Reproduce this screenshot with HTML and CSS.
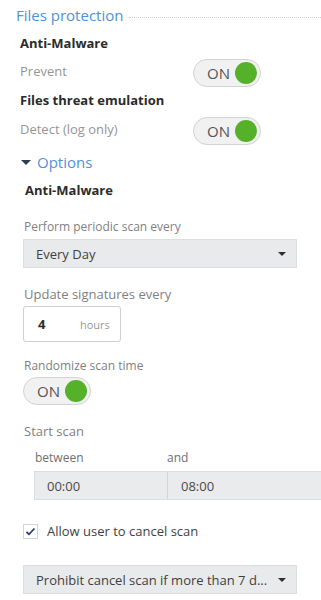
FILE: index.html
```html
<!DOCTYPE html>
<html>
<head>
<meta charset="utf-8">
<link rel="stylesheet" href="styles.css">
</head>
<body>
<div class="page">
  <div class="section-head">
    <span class="section-title">Files protection</span>
    <span class="dots"></span>
  </div>

  <div class="bold-title t1">Anti-Malware</div>
  <div class="toggle-row r1">
    <span class="row-label">Prevent</span>
    <span class="toggle"><span class="on">ON</span><span class="knob"></span></span>
  </div>

  <div class="bold-title t2">Files threat emulation</div>
  <div class="toggle-row r2">
    <span class="row-label">Detect (log only)</span>
    <span class="toggle"><span class="on">ON</span><span class="knob"></span></span>
  </div>

  <div class="options">
    <span class="caret"></span>
    <span class="options-text">Options</span>
  </div>

  <div class="inner">
    <div class="bold-title t3">Anti-Malware</div>

    <div class="label small l-perform">Perform periodic scan every</div>
    <div class="select s1"><span>Every Day</span><span class="arrow"></span></div>

    <div class="label l-update">Update signatures every</div>
    <div class="number-box"><span class="num">4</span><span class="unit">hours</span></div>

    <div class="label small l-random">Randomize scan time</div>
    <div class="toggle t-random"><span class="on">ON</span><span class="knob"></span></div>

    <div class="label l-start">Start scan</div>
    <div class="range-labels">
      <span class="rl-a">between</span>
      <span class="rl-b">and</span>
    </div>
    <div class="range">
      <div class="cell c-a">00:00</div>
      <div class="cell c-b">08:00</div>
    </div>

    <div class="check-row">
      <span class="checkbox">
        <svg width="11" height="9" viewBox="0 0 11 9"><path d="M1.5 4.8 L4 7.3 L9.5 1.5" fill="none" stroke="#263a66" stroke-width="1.7"/></svg>
      </span>
      <span class="check-label">Allow user to cancel scan</span>
    </div>

    <div class="select s2"><span>Prohibit cancel scan if more than 7 d...</span><span class="arrow"></span></div>
  </div>
</div>
</body>
</html>
```

FILE: styles.css
```css
html, body {
  margin: 0;
  padding: 0;
  background: #ffffff;
  overflow: hidden;
}
body {
  font-family: "Open Sans", "Liberation Sans", sans-serif;
  color: #333;
  width: 321px;
  height: 600px;
}
.page {
  display: flex;
  flex-direction: column;
  padding-left: 20px;
}
.section-head {
  display: flex;
  align-items: center;
  height: 30px;
  margin-left: -4px;
}
.section-title {
  color: #4f92d6;
  font-size: 15px;
  line-height: 20px;
}
.dots {
  flex: 1;
  border-top: 1px dotted #cfcfcf;
  margin-left: 6px;
  margin-top: 5px;
}
.bold-title {
  font-weight: 700;
  font-size: 13px;
  line-height: 20px;
  color: #2b2b2b;
}
.t1 { margin-top: 3px; }
.t2 { margin-top: 3px; }
.toggle-row {
  display: grid;
  grid-template-columns: 173px auto;
  align-items: center;
  height: 28px;
}
.r1 { margin-top: 6px; }
.r2 { margin-top: 7px; }
.row-label {
  font-size: 13px;
  color: #959595;
  margin-top: -4px;
}
.toggle {
  display: flex;
  align-items: center;
  justify-content: space-between;
  box-sizing: border-box;
  width: 68px;
  height: 28px;
  border: 1px solid #d3d3d3;
  border-radius: 14px;
  background: #f1f1f1;
  padding: 0 3px 0 13px;
}
.on {
  font-size: 15px;
  color: #555;
  line-height: 20px;
}
.knob {
  width: 22px;
  height: 22px;
  border-radius: 50%;
  background: #55b02a;
}
.options {
  display: flex;
  align-items: center;
  height: 20px;
  margin-top: 7px;
}
.caret {
  width: 0;
  height: 0;
  border-left: 5px solid transparent;
  border-right: 5px solid transparent;
  border-top: 5px solid #2d3c55;
  margin-left: 1px;
  margin-right: 6px;
}
.options-text {
  color: #4f92d6;
  font-size: 15px;
}
.inner {
  display: flex;
  flex-direction: column;
  padding-left: 3px;
}
.t3 { margin-top: 8px; margin-left: 2px; }
.label {
  font-size: 13px;
  line-height: 18px;
  color: #7f7f7f;
  margin-left: 1px;
}
.label.small { font-size: 12px; }
.l-perform { margin-top: 18px; }
.l-update { margin-top: 17px; }
.l-random { margin-top: 15px; }
.l-start { margin-top: 17px; }
.select {
  display: flex;
  align-items: center;
  justify-content: space-between;
  box-sizing: border-box;
  width: 274px;
  height: 29px;
  background: #e9eaec;
  border: 1px solid #dcdde0;
  padding: 0 10px 0 12px;
  font-size: 13px;
  color: #3f3f3f;
}
.s1 { margin-top: 3px; }
.s2 { margin-top: 24px; }
.arrow {
  width: 0;
  height: 0;
  border-left: 4px solid transparent;
  border-right: 4px solid transparent;
  border-top: 4px solid #2e2e2e;
}
.number-box {
  display: flex;
  align-items: center;
  box-sizing: border-box;
  width: 98px;
  height: 36px;
  margin-top: 3px;
  border: 1px solid #cfcfcf;
  border-radius: 3px;
  background: #fff;
  padding-left: 14px;
}
.num {
  font-size: 13px;
  font-weight: 700;
  color: #2b2b2b;
  width: 42px;
}
.unit {
  font-size: 11px;
  color: #9a9a9a;
}
.t-random {
  margin-top: 2px;
}
.range-labels {
  display: grid;
  grid-template-columns: 132px auto;
  margin-top: 9px;
  padding-left: 12px;
  font-size: 12px;
  line-height: 18px;
  color: #6f6f6f;
}
.range {
  display: grid;
  grid-template-columns: 132px 160px;
  margin-top: 4px;
  margin-left: 11px;
  height: 29px;
  box-sizing: border-box;
  background: #eaebed;
  border: 1px solid #dcdde0;
  border-right: none;
}
.cell {
  display: flex;
  align-items: center;
  font-size: 13px;
  color: #4a4a4a;
  padding-left: 12px;
}
.c-b {
  border-left: 1px solid #d4d5d8;
  padding-left: 13px;
}
.check-row {
  display: flex;
  align-items: center;
  height: 20px;
  margin-top: 21px;
}
.checkbox {
  display: flex;
  align-items: center;
  justify-content: center;
  box-sizing: border-box;
  width: 15px;
  height: 15px;
  border: 1px solid #d3d3d3;
  background: #fff;
  margin-right: 9px;
}
.check-label {
  font-size: 13px;
  color: #3f3f3f;
}
```
